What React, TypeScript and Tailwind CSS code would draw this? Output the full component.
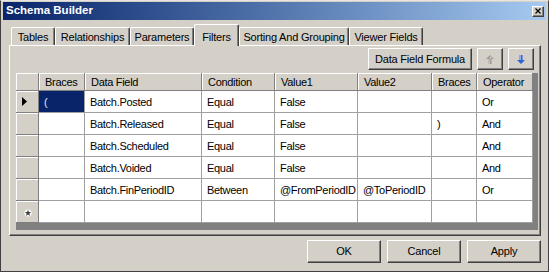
import React from 'react'

const font = { fontFamily: '"Liberation Sans", Arial, sans-serif' }

const tabs = [
  { label: 'Tables', w: 'w-[44px]' },
  { label: 'Relationships', w: 'w-[75px]' },
  { label: 'Parameters', w: 'w-[64px]' },
  { label: 'Filters', w: 'w-[45px]', active: true },
  { label: 'Sorting And Grouping', w: 'w-[110px]' },
  { label: 'Viewer Fields', w: 'w-[74px]' },
]

const cols = [
  { label: 'Braces', w: 'w-[46px]' },
  { label: 'Data Field', w: 'w-[117px]' },
  { label: 'Condition', w: 'w-[73px]' },
  { label: 'Value1', w: 'w-[83px]' },
  { label: 'Value2', w: 'w-[74px]' },
  { label: 'Braces', w: 'w-[45px]' },
  { label: 'Operator', w: 'w-[56px]' },
]

const rows = [
  ['(', 'Batch.Posted', 'Equal', 'False', '', '', 'Or'],
  ['', 'Batch.Released', 'Equal', 'False', '', ')', 'And'],
  ['', 'Batch.Scheduled', 'Equal', 'False', '', '', 'And'],
  ['', 'Batch.Voided', 'Equal', 'False', '', '', 'And'],
  ['', 'Batch.FinPeriodID', 'Between', '@FromPeriodID', '@ToPeriodID', '', 'Or'],
  ['', '', '', '', '', '', ''],
]

const raised =
  'border border-t-white border-l-white border-r-[#404040] border-b-[#404040] shadow-[inset_-1px_-1px_#808080]'

function Button({ className, children }: { className: string; children: React.ReactNode }) {
  return (
    <div className={`${className} ${raised} bg-[#d4d0c8] flex items-center justify-center text-black`}>
      {children}
    </div>
  )
}

function UpArrow() {
  return (
    <svg width="8" height="9" viewBox="0 0 8 9">
      <polygon points="4,0 8,4 5.5,4 5.5,9 2.5,9 2.5,4 0,4" fill="#a09c94" />
      <polygon points="4,1.2 6,3.2 4,3.2" fill="#e4e2dc" />
      <rect x="2.5" y="4" width="1.5" height="5" fill="#c4c0b8" />
    </svg>
  )
}

function DownArrow() {
  return (
    <svg width="8" height="9" viewBox="0 0 8 9">
      <polygon points="2.5,0 5.5,0 5.5,5 8,5 4,9 0,5 2.5,5" fill="#2f63d8" />
      <rect x="2.5" y="0" width="1.5" height="5" fill="#8fb0f0" />
    </svg>
  )
}

function RowHeader({ kind }: { kind?: 'current' | 'new' }) {
  return (
    <div className="w-[23px] h-full bg-[#d4d0c8] border-r border-b border-[#808080] shadow-[inset_1px_1px_#ffffff] flex items-center justify-center shrink-0">
      {kind === 'current' && (
        <svg width="6" height="9" viewBox="0 0 6 9" className="-ml-[4px]">
          <polygon points="0,0 5,4.5 0,9" fill="#000" />
        </svg>
      )}
      {kind === 'new' && (
        <svg width="8" height="8" viewBox="0 0 8 8" className="ml-[1px] mt-[2px]">
          <circle cx="4" cy="4" r="3.6" fill="#ffffff" />
          <polygon points="4,0.8 4.9,3 7.2,3.1 5.4,4.6 6,6.9 4,5.6 2,6.9 2.6,4.6 0.8,3.1 3.1,3" fill="#404040" />
        </svg>
      )}
    </div>
  )
}

export default function App() {
  return (
    <div
      style={font}
      className="w-[549px] h-[272px] bg-[#d4d0c8] border-t border-t-[#e8e6e0] border-l border-r border-b border-[#404040] px-[2px] pt-[1px] flex flex-col text-[11px] tracking-[-0.2px] text-black overflow-hidden"
    >
      {/* title bar */}
      <div className="h-[18px] bg-gradient-to-r from-[#0a246a] to-[#a6caf0] flex items-center justify-between pl-[3px] pr-[2px] shrink-0">
        <span className="text-white font-bold text-[11.5px] tracking-normal">Schema Builder</span>
        <div className={`w-[12px] h-[11px] ${raised} bg-[#d4d0c8] flex items-center justify-center`}>
          <svg width="6" height="6" viewBox="0 0 6 6">
            <path d="M0.5 0.5 L5.5 5.5 M5.5 0.5 L0.5 5.5" stroke="#000" strokeWidth="1.2" />
          </svg>
        </div>
      </div>

      {/* tabs */}
      <div className="ml-[6px] mr-[5px] mt-[4px] flex flex-col">
        <div className="h-[21px] flex items-end pl-[2px] relative z-10">
          {tabs.map((t) =>
            t.active ? (
              <div
                key={t.label}
                className={`${t.w} h-[22px] -mb-[1px] bg-[#d4d0c8] border-t border-l border-white border-r border-r-[#404040] rounded-t-[2px] shadow-[inset_-1px_0_#808080] flex items-start justify-center pt-[4px]`}
              >
                {t.label}
              </div>
            ) : (
              <div
                key={t.label}
                className={`${t.w} h-[18px] bg-[#d4d0c8] border-t border-l border-white border-r border-r-[#404040] rounded-t-[2px] shadow-[inset_-1px_0_#808080] flex items-center justify-center pt-[1px]`}
              >
                {t.label}
              </div>
            )
          )}
        </div>

        {/* panel */}
        <div className="h-[191px] border-t border-l border-white border-r border-b border-r-[#404040] border-b-[#404040] shadow-[inset_-1px_-1px_#808080] flex flex-col">
          <div className="flex justify-end gap-[5px] mt-[2px] pr-[6px]">
            <Button className="w-[104px] h-[22px]">Data Field Formula</Button>
            <Button className="w-[26px] h-[22px]">
              <UpArrow />
            </Button>
            <Button className="w-[26px] h-[22px]">
              <DownArrow />
            </Button>
          </div>

          {/* grid */}
          <div className="mt-[3px] ml-[6px] mr-[2px] h-[157px] bg-[#808080] flex flex-col tracking-[-0.3px]">
            <div className="h-[18px] flex shrink-0">
              <div className="w-[23px] h-full bg-[#d4d0c8] border-r border-b border-[#808080] shadow-[inset_1px_1px_#ffffff] shrink-0" />
              {cols.map((c, i) => (
                <div
                  key={i}
                  className={`${c.w} h-full bg-[#d4d0c8] border-r border-b border-[#808080] shadow-[inset_1px_1px_#ffffff] flex items-center pl-[6px] pt-[2px] whitespace-nowrap shrink-0`}
                >
                  {c.label}
                </div>
              ))}
            </div>
            {rows.map((r, ri) => (
              <div key={ri} className="h-[22px] flex shrink-0">
                <RowHeader kind={ri === 0 ? 'current' : ri === rows.length - 1 ? 'new' : undefined} />
                {r.map((v, ci) => {
                  const sel = ri === 0 && ci === 0
                  return (
                    <div
                      key={ci}
                      className={`${cols[ci].w} h-full border-r border-b border-[#a0a0a0] flex items-center pl-[5px] pt-[1px] whitespace-nowrap overflow-hidden shrink-0 ${
                        sel ? 'bg-[#0a246a] text-[#dce6ff]' : 'bg-white'
                      }`}
                    >
                      {v}
                    </div>
                  )
                })}
              </div>
            ))}
          </div>
        </div>
      </div>

      {/* dialog buttons */}
      <div className="flex justify-end gap-[6px] mt-[4px] mr-[5px]">
        <Button className="w-[74px] h-[23px]">OK</Button>
        <Button className="w-[74px] h-[23px]">Cancel</Button>
        <Button className="w-[74px] h-[23px]">Apply</Button>
      </div>
    </div>
  )
}
